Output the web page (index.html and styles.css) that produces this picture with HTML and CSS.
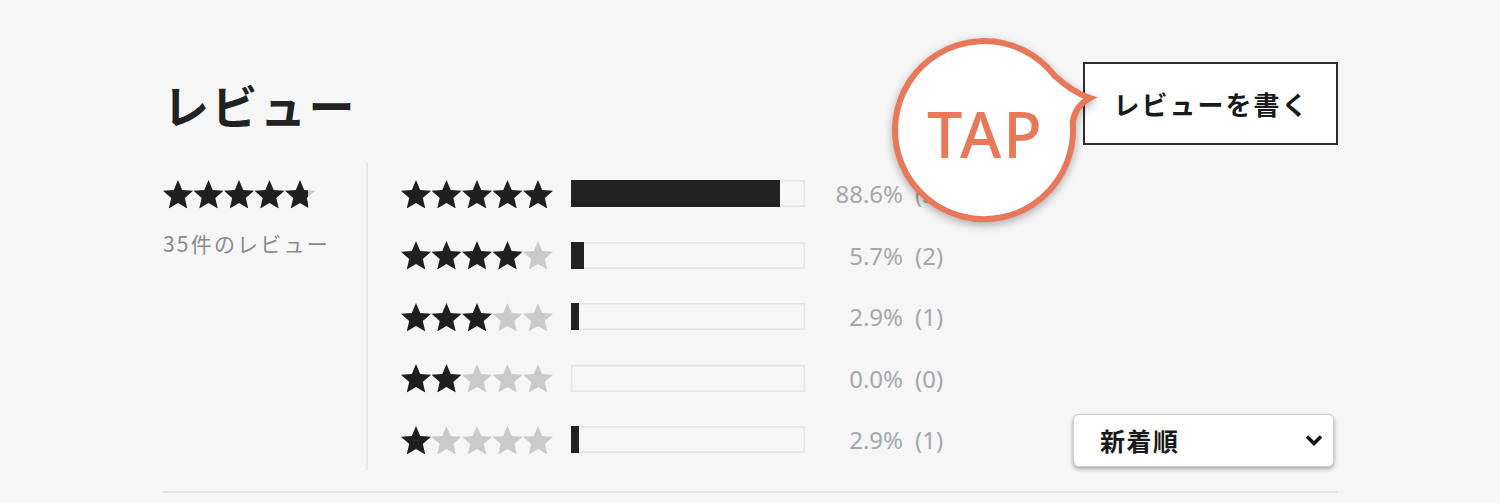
FILE: index.html
```html
<!DOCTYPE html>
<html lang="ja">
<head>
  <meta charset="UTF-8">
  <title>レビュー</title>
  <link rel="stylesheet" href="styles.css">
</head>
<body>
  <svg class="defs" width="0" height="0">
    <defs>
      <symbol id="star" viewBox="2 2 20 19">
        <path d="M12 17.27L18.18 21l-1.64-7.03L22 9.24l-7.19-.61L12 2 9.19 8.63 2 9.24l5.46 4.73L5.82 21z"/>
      </symbol>
      <linearGradient id="part" x1="0" x2="1" y1="0" y2="0">
        <stop offset="0.77" stop-color="#1f1f1f"/>
        <stop offset="0.77" stop-color="#cacaca"/>
      </linearGradient>
    </defs>
  </svg>

  <section class="reviews">
    <header class="reviews-head">
      <h2 class="reviews-title">レビュー</h2>
      <a class="write-btn" href="#">レビューを書く</a>
    </header>

    <div class="reviews-body">
      <div class="summary">
        <svg class="stars" viewBox="0 0 152 28.5">
          <use href="#star" x="0" width="30" height="28.5" class="on"/>
          <use href="#star" x="30.5" width="30" height="28.5" class="on"/>
          <use href="#star" x="61" width="30" height="28.5" class="on"/>
          <use href="#star" x="91.5" width="30" height="28.5" class="on"/>
          <use href="#star" x="122" width="30" height="28.5" fill="url(#part)"/>
        </svg>
        <p class="summary-count">35件のレビュー</p>
      </div>

      <ul class="dist">
        <li class="dist-row">
          <svg class="stars" viewBox="0 0 152 28.5">
            <use href="#star" x="0" width="30" height="28.5" class="on"/>
            <use href="#star" x="30.5" width="30" height="28.5" class="on"/>
            <use href="#star" x="61" width="30" height="28.5" class="on"/>
            <use href="#star" x="91.5" width="30" height="28.5" class="on"/>
            <use href="#star" x="122" width="30" height="28.5" class="on"/>
          </svg>
          <div class="bar"><div class="bar-fill" style="width: 89.5%"></div></div>
          <span class="pct">88.6%</span>
          <span class="cnt">(31)</span>
        </li>
        <li class="dist-row">
          <svg class="stars" viewBox="0 0 152 28.5">
            <use href="#star" x="0" width="30" height="28.5" class="on"/>
            <use href="#star" x="30.5" width="30" height="28.5" class="on"/>
            <use href="#star" x="61" width="30" height="28.5" class="on"/>
            <use href="#star" x="91.5" width="30" height="28.5" class="on"/>
            <use href="#star" x="122" width="30" height="28.5" class="off"/>
          </svg>
          <div class="bar"><div class="bar-fill" style="width: 5.7%"></div></div>
          <span class="pct">5.7%</span>
          <span class="cnt">(2)</span>
        </li>
        <li class="dist-row">
          <svg class="stars" viewBox="0 0 152 28.5">
            <use href="#star" x="0" width="30" height="28.5" class="on"/>
            <use href="#star" x="30.5" width="30" height="28.5" class="on"/>
            <use href="#star" x="61" width="30" height="28.5" class="on"/>
            <use href="#star" x="91.5" width="30" height="28.5" class="off"/>
            <use href="#star" x="122" width="30" height="28.5" class="off"/>
          </svg>
          <div class="bar"><div class="bar-fill" style="width: 3.4%"></div></div>
          <span class="pct">2.9%</span>
          <span class="cnt">(1)</span>
        </li>
        <li class="dist-row">
          <svg class="stars" viewBox="0 0 152 28.5">
            <use href="#star" x="0" width="30" height="28.5" class="on"/>
            <use href="#star" x="30.5" width="30" height="28.5" class="on"/>
            <use href="#star" x="61" width="30" height="28.5" class="off"/>
            <use href="#star" x="91.5" width="30" height="28.5" class="off"/>
            <use href="#star" x="122" width="30" height="28.5" class="off"/>
          </svg>
          <div class="bar"><div class="bar-fill" style="width: 0%"></div></div>
          <span class="pct">0.0%</span>
          <span class="cnt">(0)</span>
        </li>
        <li class="dist-row">
          <svg class="stars" viewBox="0 0 152 28.5">
            <use href="#star" x="0" width="30" height="28.5" class="on"/>
            <use href="#star" x="30.5" width="30" height="28.5" class="off"/>
            <use href="#star" x="61" width="30" height="28.5" class="off"/>
            <use href="#star" x="91.5" width="30" height="28.5" class="off"/>
            <use href="#star" x="122" width="30" height="28.5" class="off"/>
          </svg>
          <div class="bar"><div class="bar-fill" style="width: 3.4%"></div></div>
          <span class="pct">2.9%</span>
          <span class="cnt">(1)</span>
        </li>
      </ul>

      <div class="sort">
        <span class="sort-label">新着順</span>
        <svg class="chevron" viewBox="0 0 18 12">
          <path d="M2 2.5l7 7 7-7"/>
        </svg>
      </div>
    </div>

    <!-- tap callout over the write button -->
    <div class="tap">
      <svg class="tap-shape" viewBox="0 0 220 210">
        <path d="M174.1 47.2Q192 64 210 70Q195 78 192.7 94.2A89 89 0 1 1 174.1 47.2Z"/>
      </svg>
      <span class="tap-text">TAP</span>
    </div>
  </section>
</body>
</html>
```

FILE: styles.css
```css
* { box-sizing: border-box; }

body {
  margin: 0;
  background: #f6f6f6;
  font-family: "Noto Sans", "Noto Sans CJK JP", sans-serif;
  color: #222;
}

.defs {
  position: absolute;
}

.reviews {
  position: relative;
  width: 1175px;
  margin-left: 163px;
  padding-top: 62px;
  padding-bottom: 20px;
  border-bottom: 2px solid #e2e2e2;
}

.reviews-head {
  display: flex;
  align-items: center;
  justify-content: space-between;
}

.reviews-title {
  margin: 0;
  font-family: "Noto Sans CJK JP", sans-serif;
  font-size: 46px;
  font-weight: 700;
  letter-spacing: 2.5px;
  color: #222;
}

.write-btn {
  display: flex;
  align-items: center;
  justify-content: center;
  width: 255px;
  height: 83px;
  padding-left: 2px;
  background: #fff;
  border: 2px solid #2e2e2e;
  font-family: "Noto Sans CJK JP", sans-serif;
  font-size: 26px;
  font-weight: 700;
  letter-spacing: 2px;
  color: #1a1a1a;
  text-decoration: none;
}

.reviews-body {
  display: flex;
  margin-top: 18px;
}

.summary {
  width: 205px;
  padding-top: 17px;
  border-right: 2px solid #e6e6e6;
}

.stars {
  display: block;
  width: 152px;
  height: 28.5px;
  flex: none;
}

.stars .on { fill: #1f1f1f; }
.stars .off { fill: #cacaca; }

.summary-count {
  margin: 19px 0 0;
  font-family: "Noto Sans CJK JP", sans-serif;
  font-size: 21px;
  letter-spacing: 2.2px;
  color: #8a8a8a;
}

.dist {
  margin: 0;
  padding: 0 0 0 33px;
  list-style: none;
}

.dist-row {
  display: flex;
  align-items: center;
  height: 61.5px;
}

.bar {
  width: 234px;
  height: 27px;
  margin-left: 18px;
  box-shadow: inset 0 0 0 1.5px #e3e3e3;
}

.bar-fill {
  height: 100%;
  background: #222;
}

.pct,
.cnt {
  font-size: 24px;
  color: #a5a7ac;
}

.pct {
  width: 98px;
  text-align: right;
}

.cnt {
  margin-left: 12px;
}

.sort {
  display: flex;
  align-items: center;
  justify-content: space-between;
  align-self: flex-end;
  width: 261px;
  height: 53px;
  margin: 0 4px 4px auto;
  padding: 0 10px 0 26px;
  background: #fff;
  border: 1px solid #cfcfcf;
  border-radius: 6px;
  box-shadow: 0 2px 4px rgba(0, 0, 0, 0.35);
}

.sort-label {
  font-family: "Noto Sans CJK JP", sans-serif;
  font-size: 25px;
  font-weight: 700;
  letter-spacing: 1.5px;
  color: #1a1a1a;
}

.chevron {
  width: 18px;
  height: 12px;
  fill: none;
  stroke: #111;
  stroke-width: 3.5;
}

.tap {
  position: absolute;
  left: 717px;
  top: 28px;
  width: 220px;
  height: 210px;
}

.tap-shape {
  display: block;
  width: 220px;
  height: 210px;
  overflow: visible;
  fill: #fff;
  stroke: #e8785a;
  stroke-width: 6;
  filter: drop-shadow(0 3px 4px rgba(0, 0, 0, 0.3));
}

.tap-text {
  position: absolute;
  left: 47px;
  top: 74px;
  font-size: 63px;
  font-weight: 500;
  letter-spacing: 2px;
  color: #e8785a;
  line-height: 1;
}
```
